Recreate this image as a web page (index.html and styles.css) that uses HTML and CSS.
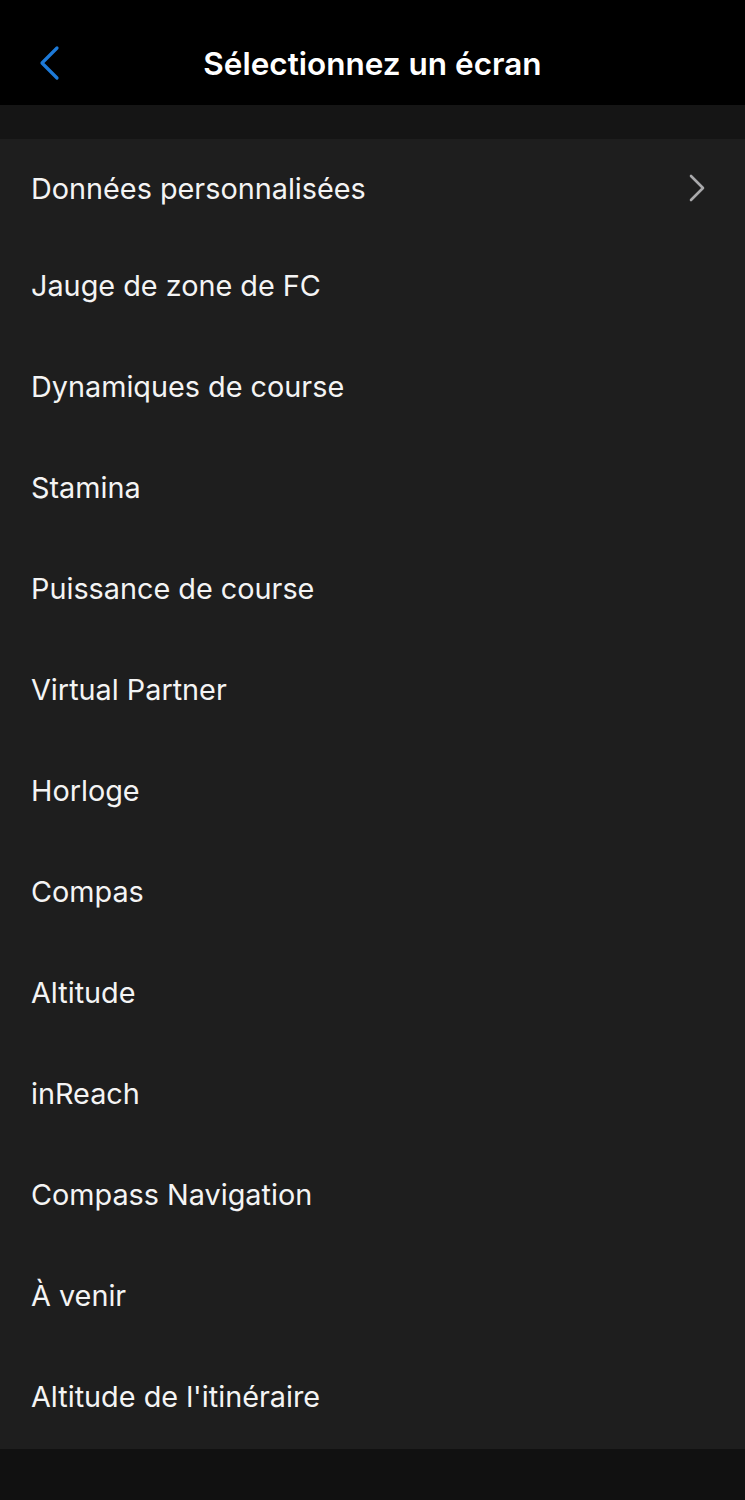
FILE: index.html
```html
<!DOCTYPE html>
<html lang="fr">
<head>
  <meta charset="UTF-8">
  <meta name="viewport" content="width=device-width, initial-scale=1.0">
  <title>Sélectionnez un écran</title>
  <link rel="stylesheet" href="styles.css">
</head>
<body>
  <div class="screen">
    <div class="nav-bar">
      <button class="back-button" aria-label="Retour">
        <svg width="24" height="36" viewBox="0 0 24 36">
          <polyline points="19,3 4,18 19,33" fill="none" stroke="#1d7ad8" stroke-width="3.2" stroke-linecap="round" stroke-linejoin="round"/>
        </svg>
      </button>
      <div class="nav-title">Sélectionnez un écran</div>
    </div>

    <div class="spacer"></div>

    <ul class="screen-list">
      <li class="screen-item first">
        <span>Données personnalisées</span>
        <svg class="chevron" width="20" height="30" viewBox="0 0 20 30">
          <polyline points="4,3 16,15 4,27" fill="none" stroke="#a9a9ab" stroke-width="2.6" stroke-linecap="round" stroke-linejoin="round"/>
        </svg>
      </li>
      <li class="screen-item">Jauge de zone de FC</li>
      <li class="screen-item">Dynamiques de course</li>
      <li class="screen-item">Stamina</li>
      <li class="screen-item">Puissance de course</li>
      <li class="screen-item">Virtual Partner</li>
      <li class="screen-item">Horloge</li>
      <li class="screen-item">Compas</li>
      <li class="screen-item">Altitude</li>
      <li class="screen-item">inReach</li>
      <li class="screen-item">Compass Navigation</li>
      <li class="screen-item">À venir</li>
      <li class="screen-item">Altitude de l'itinéraire</li>
    </ul>

    <div class="footer-space"></div>
  </div>
</body>
</html>
```

FILE: styles.css
```css
body {
  margin: 0;
  padding: 0;
  background-color: #111111;
  font-family: Inter, Roboto, "Liberation Sans", sans-serif;
  color: #f4f4f4;
}

.screen {
  width: 745px;
  min-height: 1500px;
  display: flex;
  flex-direction: column;
}

.nav-bar {
  height: 105px;
  box-sizing: border-box;
  padding-top: 23px;
  background-color: #000000;
  display: flex;
  align-items: center;
  justify-content: center;
  position: relative;
}

.back-button {
  position: absolute;
  left: 38px;
  top: 45px;
  background: none;
  border: none;
  padding: 0;
  width: 24px;
  height: 36px;
  cursor: pointer;
}

.back-button svg {
  display: block;
}

.nav-title {
  font-size: 31.5px;
  font-weight: 600;
  color: #ffffff;
  line-height: 36px;
}

.spacer {
  height: 34px;
  background-color: #151515;
}

.screen-list {
  list-style: none;
  margin: 0;
  padding: 0;
  background-color: #1e1e1e;
}

.screen-item {
  height: 101px;
  display: flex;
  align-items: center;
  justify-content: space-between;
  padding: 0 38px 4px 31px;
  font-size: 28.8px;
  font-weight: 400;
  color: #f4f4f4;
  box-sizing: border-box;
}

.screen-item.first {
  height: 98px;
  padding-bottom: 0;
}

.chevron {
  display: block;
}

.footer-space {
  flex: 1;
  background-color: #111111;
}
```
